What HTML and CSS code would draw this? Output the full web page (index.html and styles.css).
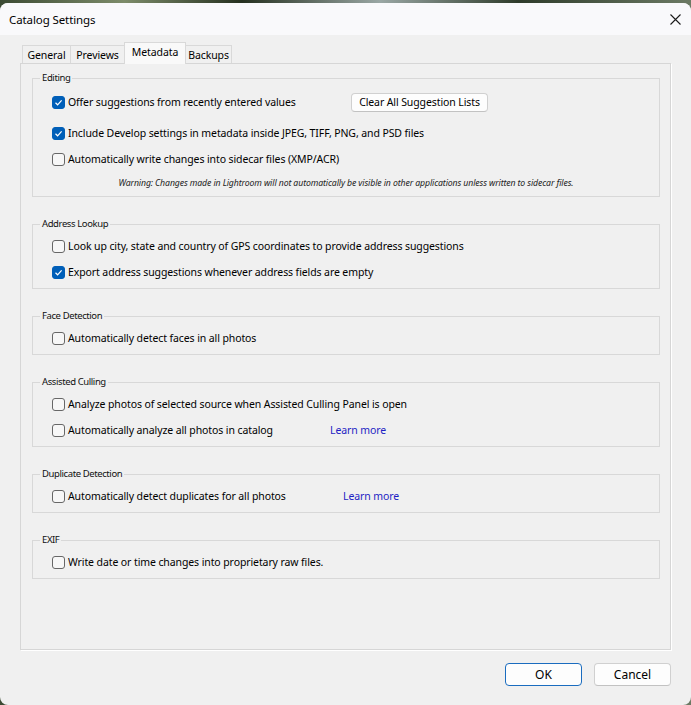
FILE: index.html
```html
<!DOCTYPE html>
<html lang="en">
<head>
    <meta charset="UTF-8">
    <title>Catalog Settings</title>
    <link rel="stylesheet" href="styles.css">
</head>
<body>

    <div class="window">
        <!-- Title bar -->
        <div class="titlebar">
            <span class="title">Catalog Settings</span>
            <span class="close">
                <svg width="11" height="11" viewBox="0 0 11 11"><path d="M0.5 0.5L10.5 10.5M10.5 0.5L0.5 10.5" stroke="#1b1b1b" stroke-width="1.1" fill="none"/></svg>
            </span>
        </div>

        <div class="dialog">
            <!-- Tabs -->
            <div class="tabs">
                <div class="tab tab-general">General</div>
                <div class="tab tab-previews">Previews</div>
                <div class="tab tab-metadata active">Metadata</div>
                <div class="tab tab-backups">Backups</div>
            </div>

            <div class="panel">
                <!-- Editing -->
                <fieldset class="group">
                    <legend>Editing</legend>
                    <div class="row row-tall">
                        <label class="opt opt-clear"><span class="check on"><svg width="11" height="11" viewBox="0 0 11 11"><path d="M2.5 5.8L4.6 7.8L8.6 3.4" stroke="#fff" stroke-width="1.2" fill="none"/></svg></span>Offer suggestions from recently entered values</label>
                        <button class="btn btn-clear">Clear All Suggestion Lists</button>
                    </div>
                    <div class="row">
                        <label class="opt"><span class="check on"><svg width="11" height="11" viewBox="0 0 11 11"><path d="M2.5 5.8L4.6 7.8L8.6 3.4" stroke="#fff" stroke-width="1.2" fill="none"/></svg></span>Include Develop settings in metadata inside JPEG, TIFF, PNG, and PSD files</label>
                    </div>
                    <div class="row">
                        <label class="opt"><span class="check"></span>Automatically write changes into sidecar files (XMP/ACR)</label>
                    </div>
                    <p class="warning">Warning: Changes made in Lightroom will not automatically be visible in other applications unless written to sidecar files.</p>
                </fieldset>

                <!-- Address Lookup -->
                <fieldset class="group">
                    <legend>Address Lookup</legend>
                    <div class="row">
                        <label class="opt"><span class="check"></span>Look up city, state and country of GPS coordinates to provide address suggestions</label>
                    </div>
                    <div class="row">
                        <label class="opt"><span class="check on"><svg width="11" height="11" viewBox="0 0 11 11"><path d="M2.5 5.8L4.6 7.8L8.6 3.4" stroke="#fff" stroke-width="1.2" fill="none"/></svg></span>Export address suggestions whenever address fields are empty</label>
                    </div>
                </fieldset>

                <!-- Face Detection -->
                <fieldset class="group">
                    <legend>Face Detection</legend>
                    <div class="row">
                        <label class="opt"><span class="check"></span>Automatically detect faces in all photos</label>
                    </div>
                </fieldset>

                <!-- Assisted Culling -->
                <fieldset class="group">
                    <legend>Assisted Culling</legend>
                    <div class="row">
                        <label class="opt"><span class="check"></span>Analyze photos of selected source when Assisted Culling Panel is open</label>
                    </div>
                    <div class="row">
                        <label class="opt opt-culling"><span class="check"></span>Automatically analyze all photos in catalog</label>
                        <a href="#" class="learn-more">Learn more</a>
                    </div>
                </fieldset>

                <!-- Duplicate Detection -->
                <fieldset class="group">
                    <legend>Duplicate Detection</legend>
                    <div class="row">
                        <label class="opt opt-duplicates"><span class="check"></span>Automatically detect duplicates for all photos</label>
                        <a href="#" class="learn-more">Learn more</a>
                    </div>
                </fieldset>

                <!-- EXIF -->
                <fieldset class="group">
                    <legend>EXIF</legend>
                    <div class="row">
                        <label class="opt"><span class="check"></span>Write date or time changes into proprietary raw files.</label>
                    </div>
                </fieldset>
            </div>

            <!-- Dialog buttons -->
            <div class="actions">
                <button class="btn btn-action default">OK</button>
                <button class="btn btn-action">Cancel</button>
            </div>
        </div>
    </div>

</body>
</html>
```

FILE: styles.css
```css
* {
    margin: 0;
    padding: 0;
    box-sizing: border-box;
}

body {
    height: 705px;
    overflow: hidden;
    padding-top: 3px;
    background: linear-gradient(90deg, #3b4a33, #7d8c6a 18%, #25301f 35%, #9aa7a4 55%, #2e3b2a 75%, #6c7a64);
    font-family: "Noto Sans", "Open Sans", sans-serif;
    font-size: 10.5px;
    letter-spacing: -0.1px;
    color: #000;
}

.window {
    height: 702px;
    background-color: #f0f0f0;
    border-radius: 8px;
    overflow: hidden;
}

.titlebar {
    height: 32px;
    display: flex;
    align-items: center;
    justify-content: space-between;
    padding: 0 10px 0 9px;
    background-color: #f9f9fb;
}

.title {
    font-size: 11.5px;
}

.close {
    display: flex;
}

.dialog {
    padding: 7px 20px 0;
}

/* Tabs */
.tabs {
    display: flex;
    align-items: flex-end;
    height: 22px;
    margin-bottom: -1px;
    padding-left: 2px;
}

.tab {
    height: 19px;
    line-height: 18px;
    text-align: center;
    background-color: #f0f0f0;
    border: 1px solid #d9d9d9;
    border-bottom: none;
    border-right: none;
}

.tab-general { width: 48px; }
.tab-previews { width: 54px; }
.tab-metadata { width: 62px; }
.tab-backups { width: 46px; border-right: 1px solid #d9d9d9; }

.tab.active {
    position: relative;
    z-index: 2;
    height: 22px;
    background-color: #f9f9f9;
    border-right: 1px solid #d9d9d9;
}

.tab.active + .tab {
    border-left: none;
}

/* Panel */
.panel {
    position: relative;
    z-index: 1;
    height: 587px;
    padding: 7px 10px 0 11px;
    border: 1px solid #d6d6d6;
    box-shadow: 1px 1px 0 #fff;
}

.group {
    border: 1px solid #d8d8d8;
    padding: 2px 0 3px 19px;
    margin-bottom: 20px;
    min-inline-size: 0;
}

.group legend {
    font-size: 9.5px;
    letter-spacing: -0.4px;
    line-height: 14px;
    padding: 0 2px;
    margin-left: -12px;
    color: #111;
}

.row {
    display: flex;
    align-items: center;
    height: 26px;
}

.row-tall {
    height: 30px;
    margin-bottom: 3px;
}

.opt {
    display: flex;
    align-items: center;
    gap: 3px;
    white-space: nowrap;
}

.opt-clear { width: 299px; }
.opt-culling { width: 278px; }
.opt-duplicates { width: 291px; }

.check {
    width: 13px;
    height: 13px;
    flex-shrink: 0;
    display: flex;
    align-items: center;
    justify-content: center;
    border: 1px solid #676767;
    border-radius: 3px;
    background-color: #f7f7f7;
}

.check.on {
    border-color: #005fb8;
    background-color: #005fb8;
}

.warning {
    height: 21px;
    line-height: 22px;
    margin-left: -19px;
    text-align: center;
    font-size: 8.7px;
    font-style: italic;
    color: #222;
}

.learn-more {
    color: #1f1fc4;
    text-decoration: none;
}

/* Buttons */
.btn {
    font-family: inherit;
    letter-spacing: inherit;
    color: #000;
    background-color: #fdfdfd;
    border: 1px solid #d0d0d0;
    border-bottom-color: #c2c2c2;
    border-radius: 4px;
}

.btn-clear {
    width: 137px;
    height: 19px;
    font-size: 10.5px;
}

.actions {
    display: flex;
    justify-content: flex-end;
    gap: 12px;
    margin-top: 13px;
}

.btn-action {
    width: 77px;
    height: 23px;
    font-size: 12px;
    letter-spacing: 0;
}

.btn-action.default {
    border-color: #1a6cbf;
}
```
